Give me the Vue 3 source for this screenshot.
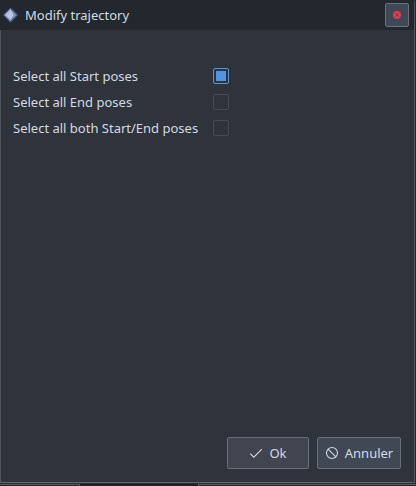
<script setup>
import { ref } from 'vue'

const options = ref([
  { id: 'start', label: 'Select all Start poses', checked: true },
  { id: 'end', label: 'Select all End poses', checked: false },
  { id: 'both', label: 'Select all both Start/End poses', checked: false },
])
</script>

<template>
  <div class="screen">
    <section class="dialog">
      <header class="titlebar">
        <svg class="logo" width="16" height="16" viewBox="0 0 16 16">
          <path d="M7.5 1.2 14.5 8 7.5 15 .7 8Z" fill="#7d90bd" />
          <path d="M7.5 2 2 8 7.5 13 10.5 7Z" fill="#b3bdd6" />
          <path d="M7.5 1.2 14.5 8 7.5 15" fill="none" stroke="#3d5488" stroke-width="1.2" />
          <path d="M7.5 1.2 .7 8 7.5 15" fill="none" stroke="#5a6f9c" stroke-width="1" />
          <path d="M5 10 9 5.5M7.5 11.5 10 8" stroke="#d5dcea" stroke-width="1" />
        </svg>
        <h1 class="title">Modify trajectory</h1>
        <button class="close" aria-label="Close">
          <svg width="8" height="8" viewBox="0 0 8 8">
            <circle cx="4" cy="4" r="4" fill="#d8404f" />
            <path d="M2.3 2.3 5.7 5.7M5.7 2.3 2.3 5.7" stroke="#843746" stroke-width="1" />
          </svg>
        </button>
      </header>
      <main class="content">
        <div class="options">
          <label v-for="o in options" :key="o.id" class="option">
            <span class="label">{{ o.label }}</span>
            <input v-model="o.checked" class="check" type="checkbox" />
          </label>
        </div>
        <footer class="actions">
          <button class="btn ok">
            <svg width="14" height="14" viewBox="0 0 14 14">
              <path d="M1.2 7.7 4.8 11.2 12.8 3.2" fill="none" stroke="#d3dae3" stroke-width="1.1" />
            </svg>
            <span>Ok</span>
          </button>
          <button class="btn cancel">
            <svg width="14" height="14" viewBox="0 0 14 14">
              <circle cx="7" cy="7" r="5.5" fill="none" stroke="#d3dae3" stroke-width="1.1" />
              <path d="M3.1 3.1 10.9 10.9" stroke="#d3dae3" stroke-width="1.1" />
            </svg>
            <span>Annuler</span>
          </button>
        </footer>
      </main>
    </section>
    <div class="behind"><i class="pane first"></i><i class="pane gap"></i><i class="pane last"></i></div>
  </div>
</template>

<style>
body {
  margin: 0;
  background: #23272e;
}
</style>

<style scoped>
.screen {
  width: 416px;
  height: 486px;
  box-sizing: border-box;
  display: flex;
  flex-direction: column;
  background: #23272e;
  font-family: "Noto Sans", sans-serif;
  font-size: 13px;
  color: #d3dae3;
  overflow: hidden;
}
.dialog {
  width: 415px;
  height: 483px;
  box-sizing: border-box;
  display: flex;
  flex-direction: column;
  border-right: 1px solid #50555e;
  border-top-right-radius: 3px;
}
.titlebar {
  height: 30px;
  flex: none;
  box-sizing: border-box;
  display: flex;
  align-items: center;
  padding: 0 5px 0 3px;
  background: #23272e;
}
.logo {
  flex: none;
}
.title {
  flex: 1;
  margin: 0 0 0 6px;
  font-size: 13px;
  font-weight: 400;
  line-height: 18px;
}
.close {
  width: 24px;
  height: 24px;
  padding: 0;
  display: flex;
  align-items: center;
  justify-content: center;
  border: 1px solid #6b727e;
  border-radius: 2px;
  background: #414855;
}
.content {
  flex: 1;
  box-sizing: border-box;
  display: flex;
  flex-direction: column;
  justify-content: space-between;
  padding: 33px 13px 13px 12px;
  border-left: 1px solid #50555e;
  border-bottom: 1px solid #62666e;
  background: #2f333b;
}
.option {
  height: 26px;
  display: flex;
  align-items: center;
}
.label {
  width: 200px;
  line-height: 18px;
  white-space: nowrap;
}
.check {
  appearance: none;
  width: 16px;
  height: 16px;
  margin: 0;
  box-sizing: border-box;
  border: 1px solid #474b53;
  border-radius: 2px;
}
.check:checked {
  border-color: #5294e2;
  padding: 2px;
  background: #5294e2 content-box;
}
.actions {
  display: flex;
  justify-content: flex-end;
  gap: 8px;
}
.btn {
  height: 32px;
  padding: 0;
  box-sizing: border-box;
  display: flex;
  align-items: center;
  justify-content: center;
  gap: 6px;
  border: 1px solid #697079;
  border-radius: 2px;
  background: #414550;
  font: inherit;
  line-height: 18px;
  color: inherit;
}
.ok {
  width: 82px;
}
.cancel {
  width: 84px;
  background: #414855;
}
.behind {
  height: 3px;
  box-sizing: border-box;
  padding-top: 1px;
  display: flex;
  background: #292d35;
}
.pane {
  box-sizing: border-box;
  height: 2px;
  border-top: 1px solid #565a63;
  background: #20222a;
}
.first {
  width: 80px;
  border-right: 1px solid #565a63;
}
.gap {
  width: 118px;
  border-top-color: #1e2127;
  background: #1e2127;
}
.last {
  flex: 1;
  border-left: 1px solid #565a63;
}
</style>
